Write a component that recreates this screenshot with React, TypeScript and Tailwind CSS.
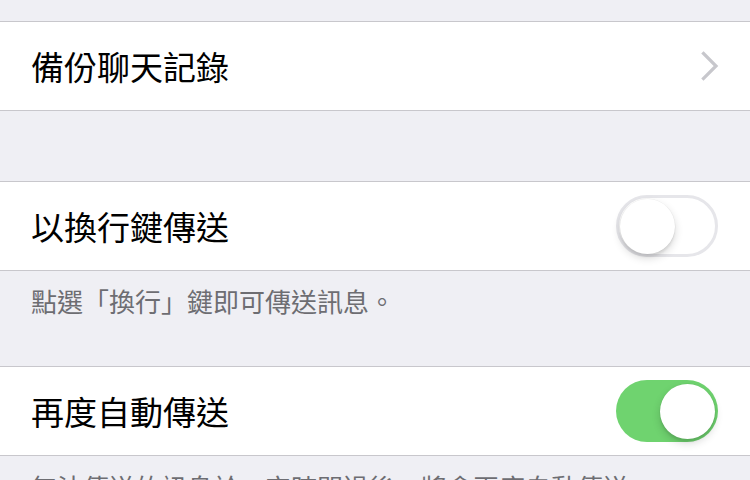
import React from "react";

const font = { fontFamily: '"Noto Sans CJK TC", "Noto Sans CJK SC", sans-serif' };

function Toggle({ on }: { on: boolean }) {
  return (
    <div
      className={
        "relative h-[62px] w-[102px] shrink-0 rounded-full " +
        (on ? "bg-[#6fd36f]" : "bg-white border-[3px] border-[#e6e6ea]")
      }
    >
      <div
        className={
          "absolute h-[55px] w-[55px] rounded-full bg-white shadow-[0_4px_8px_rgba(0,0,0,0.16),0_3px_2px_rgba(0,0,0,0.06),0_0_0_0.5px_rgba(0,0,0,0.05)] " +
          (on ? "left-[44px] top-[4px]" : "left-[1px] top-[1px]")
        }
      />
    </div>
  );
}

function Row({ label, right }: { label: string; right: React.ReactNode }) {
  return (
    <div className="flex h-[90px] items-center justify-between border-y border-[#c8c7cc] bg-white pl-[31px] pr-[32px]">
      <span className="text-[33px] leading-none text-black">{label}</span>
      {right}
    </div>
  );
}

function Chevron() {
  return (
    <svg width="18" height="30" viewBox="0 0 18 30" className="mr-[-1px]">
      <path d="M2.5 2.5 L15 15 L2.5 27.5" fill="none" stroke="#c7c7cc" strokeWidth="3.2" strokeLinecap="square" />
    </svg>
  );
}

export default function App() {
  return (
    <div className="h-[480px] w-[750px] overflow-hidden bg-[#efeff4]" style={font}>
      <div className="h-[21px]" />
      <Row label="備份聊天記錄" right={<Chevron />} />
      <div className="h-[70px]" />
      <Row label="以換行鍵傳送" right={<Toggle on={false} />} />
      <div className="h-[95px] pl-[31px] pt-[12px] text-[26px] leading-[36px] text-[#6d6d72]">
        點選「換行」鍵即可傳送訊息。
      </div>
      <Row label="再度自動傳送" right={<Toggle on={true} />} />
      <div className="pl-[31px] pt-[13px] text-[26px] leading-[36px] text-[#6d6d72]">
        無法傳送的訊息於一定時間過後，將會再度自動傳送。
      </div>
    </div>
  );
}
